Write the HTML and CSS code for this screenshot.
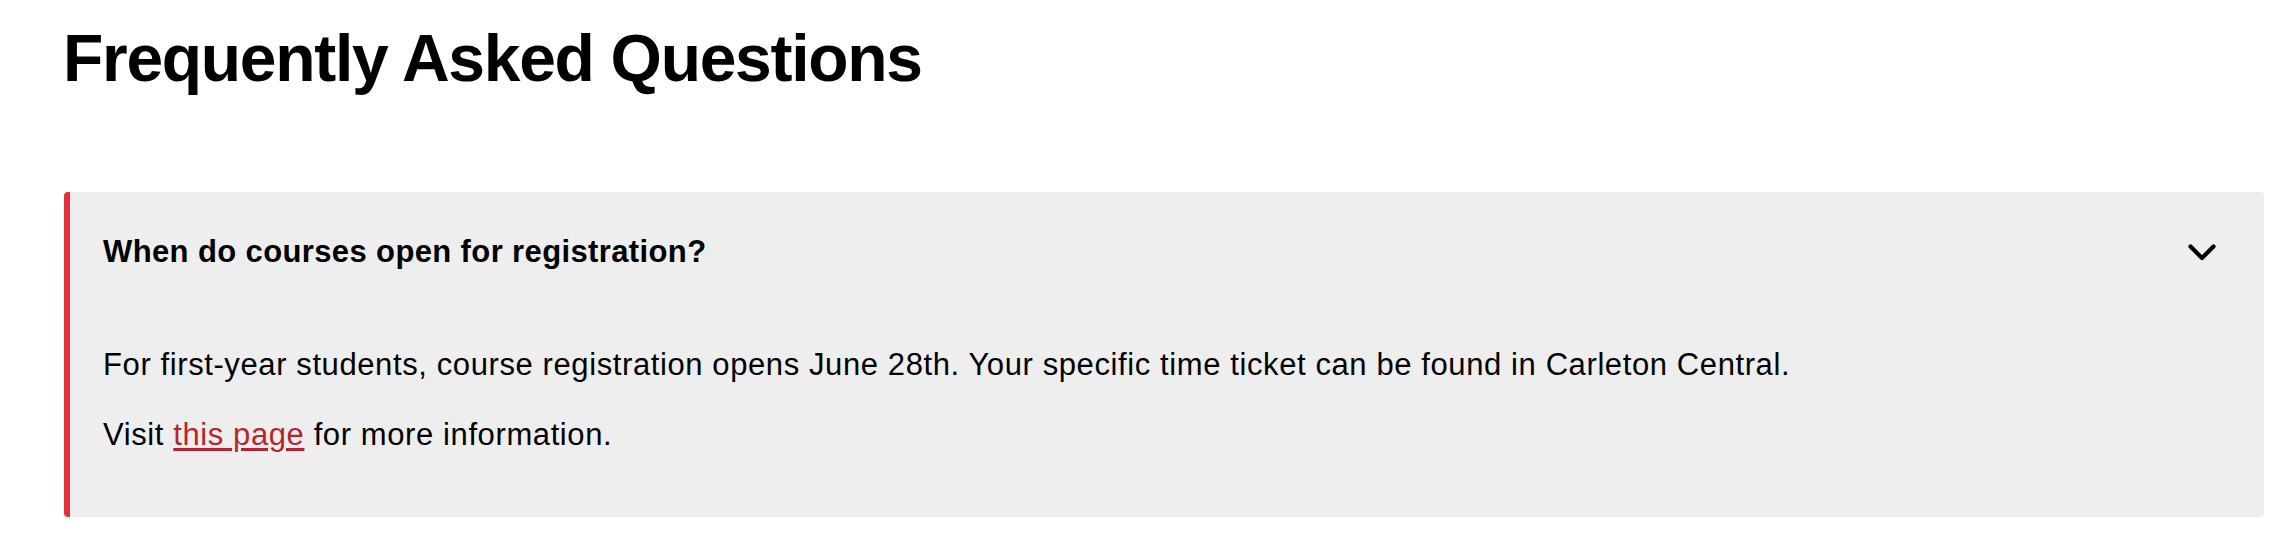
FILE: index.html
```html
<!DOCTYPE html>
<html lang="en">
<head>
<meta charset="utf-8">
<title>Frequently Asked Questions</title>
<link rel="stylesheet" href="styles.css">
</head>
<body>
<main class="faq">
  <h1 class="faq-title">Frequently Asked Questions</h1>
  <section class="faq-item">
    <button class="faq-question" type="button" aria-expanded="true">
      <span class="faq-question-text">When do courses open for registration?</span>
      <svg class="faq-chevron" width="28" height="17" viewBox="0 0 28 17" aria-hidden="true">
        <polyline points="2.5,2.5 14,14 25.5,2.5" fill="none" stroke="#000" stroke-width="4.2" stroke-linecap="round" stroke-linejoin="round"/>
      </svg>
    </button>
    <div class="faq-answer">
      <p>For first-year students, course registration opens June 28th. Your specific time ticket can be found in Carleton Central.</p>
      <p>Visit <a href="#" class="faq-link">this page</a> for more information.</p>
    </div>
  </section>
</main>
</body>
</html>
```
FILE: styles.css
```css
* {
  box-sizing: border-box;
}

html, body {
  margin: 0;
  padding: 0;
  background: #ffffff;
}

body {
  font-family: "Liberation Sans", Arial, Helvetica, sans-serif;
  color: #000000;
}

.faq {
  padding: 0 28px 0 64px;
}

.faq-title {
  margin: 19px 0 94px -1px;
  font-size: 66px;
  line-height: 1.2;
  font-weight: 700;
  letter-spacing: -1.3px;
}

.faq-item {
  background: #eeeeee;
  border-left: 6px solid #e4303a;
  border-radius: 4px;
}

.faq-question {
  display: flex;
  align-items: center;
  justify-content: space-between;
  width: 100%;
  margin: 0;
  padding: 42px 48px 38px 33px;
  background: transparent;
  border: 0;
  font-family: inherit;
  color: inherit;
  text-align: left;
  cursor: pointer;
}

.faq-question-text {
  font-size: 31px;
  line-height: 36px;
  font-weight: 700;
  letter-spacing: 0.38px;
}

.faq-chevron {
  display: block;
  flex: none;
}

.faq-answer {
  padding: 39px 48px 64px 33px;
}

.faq-answer p {
  margin: 0 0 34px;
  font-size: 31px;
  line-height: 36px;
  letter-spacing: 0.6px;
}

.faq-answer p:last-child {
  margin-bottom: 0;
}

.faq-link {
  color: #b3262f;
  text-decoration: underline;
  text-underline-offset: 3px;
}
```
